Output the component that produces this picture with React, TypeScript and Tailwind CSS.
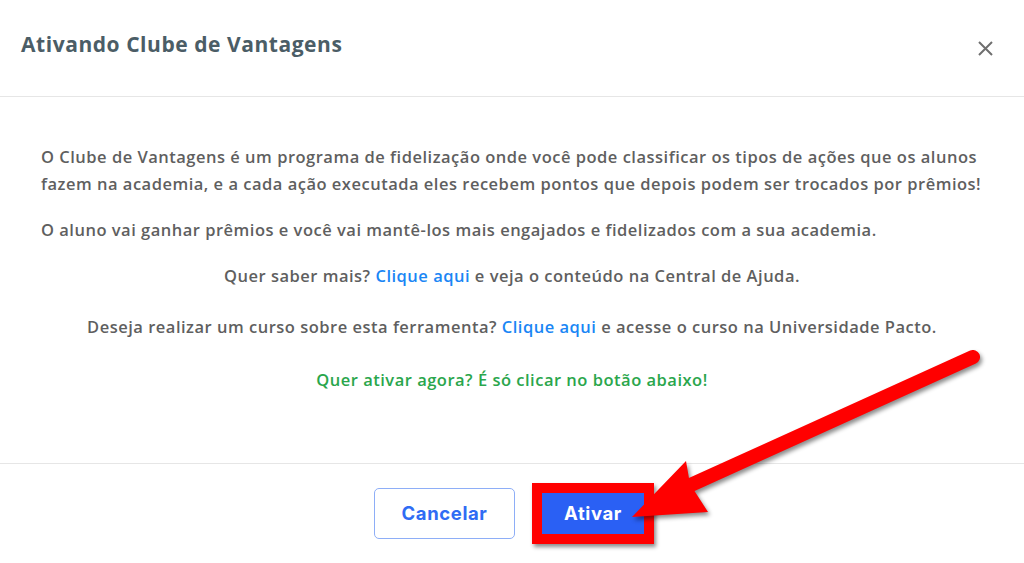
import React from 'react';

const bodyFont = { fontFamily: '"Open Sans", "Liberation Sans", sans-serif' };

const App = () => {
    return (
        <div className="relative w-[1024px] h-[563px] overflow-hidden bg-white" style={bodyFont}>
            {/* Header */}
            <header className="h-[97px] flex items-center justify-between pl-[21px] pr-[31px] border-b border-[#e6e6e6]">
                <h1 className="text-[21px] font-bold text-[#4b5d66] tracking-[0.55px] mt-[-6px]">Ativando Clube de Vantagens</h1>
                <button className="w-[16px] h-[16px] flex items-center justify-center text-[#6f6f6f]">
                    <svg width="15" height="15" viewBox="0 0 15 15" fill="none" stroke="currentColor" strokeWidth="2">
                        <path d="M1 1 L14 14 M14 1 L1 14" />
                    </svg>
                </button>
            </header>

            {/* Body */}
            <main className="h-[366px] pt-[46px] px-[41px] text-[16.5px] leading-[27px] font-semibold tracking-[0.5px] text-[#5f5f5f]">
                <p className="mb-[19px]">
                    O Clube de Vantagens é um programa de fidelização onde você pode classificar os tipos de ações que os alunos fazem na academia, e a cada ação executada eles recebem pontos que depois podem ser trocados por prêmios!
                </p>
                <p className="mb-[19px]">
                    O aluno vai ganhar prêmios e você vai mantê-los mais engajados e fidelizados com a sua academia.
                </p>
                <p className="mb-[24px] text-center">
                    Quer saber mais? <a href="#" className="text-[#1a86f5]">Clique aqui</a> e veja o conteúdo na Central de Ajuda.
                </p>
                <p className="mb-[26px] text-center">
                    Deseja realizar um curso sobre esta ferramenta? <a href="#" className="text-[#1a86f5]">Clique aqui</a> e acesse o curso na Universidade Pacto.
                </p>
                <p className="text-center text-[#2aa64c]">Quer ativar agora? É só clicar no botão abaixo!</p>
            </main>

            {/* Footer */}
            <footer className="h-[100px] border-t border-[#e6e6e6] flex items-center justify-center gap-[17px] pl-[4px]" style={{ fontFamily: 'Inter, "Open Sans", sans-serif' }}>
                <button className="w-[141px] h-[51px] rounded-[5px] border border-[#8eaef7] text-[#2f6cf4] text-[18.5px] font-bold tracking-[0.6px]">
                    Cancelar
                </button>
                <div className="border-[10px] border-[#ff0000] shadow-[2px_3px_4px_rgba(0,0,0,0.45)]">
                    <button className="w-[102px] h-[41px] bg-[#2a60f4] text-white text-[18.5px] font-bold tracking-[0.6px]">
                        Ativar
                    </button>
                </div>
            </footer>

            {/* Annotation arrow */}
            <svg className="absolute left-0 top-0 pointer-events-none" width="1024" height="563" viewBox="0 0 1024 563" style={{ filter: 'drop-shadow(2px 3px 2px rgba(0,0,0,0.45))' }}>
                <line x1="973" y1="357" x2="684" y2="488" stroke="#ff0000" strokeWidth="14" strokeLinecap="round" />
                <polygon points="632,517 686,461 690,484 708,512" fill="#ff0000" />
            </svg>
        </div>
    );
};

export default App;
